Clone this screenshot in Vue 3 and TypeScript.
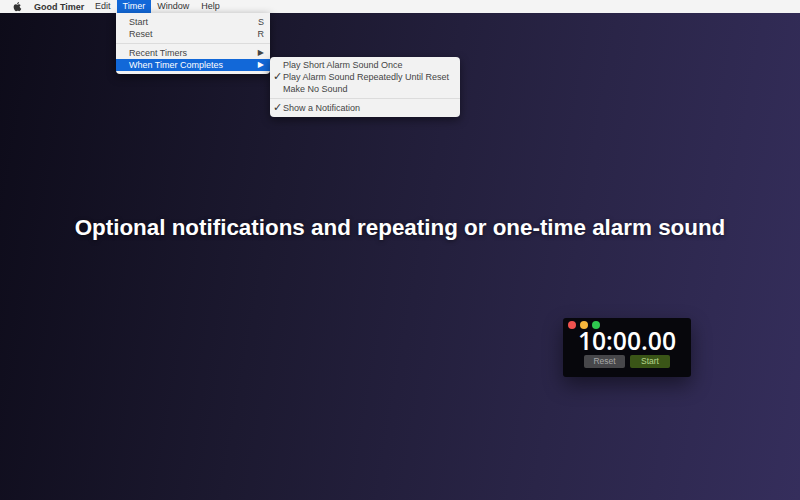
<script setup lang="ts">
const menus = ["Edit", "Timer", "Window", "Help"];
const alarmItems = [
  { label: "Play Short Alarm Sound Once", on: false },
  { label: "Play Alarm Sound Repeatedly Until Reset", on: true },
  { label: "Make No Sound", on: false },
];
</script>

<template>
  <main class="desktop">
    <header class="menubar">
      <svg class="apple" viewBox="0 0 14 16" width="9" height="11">
        <path d="M10.4 8.5c0-1.7 1.4-2.5 1.5-2.6-.8-1.200-2.100-1.300-2.500-1.400-1.100-.1-2.100.6-2.600.6-.6 0-1.400-.6-2.300-.6C3.300 4.500 2.200 5.200 1.600 6.200c-1.300 2.200-.3 5.500.9 7.300.6.900 1.300 1.900 2.300 1.800.9 0 1.300-.6 2.400-.6s1.400.6 2.400.6 1.600-.9 2.200-1.800c.7-1 1-2 1-2.100-.1 0-1.900-.8-2.400-2.900zM8.600 3.200c.5-.6.800-1.500.7-2.300-.7 0-1.600.5-2.100 1.100-.5.500-.9 1.400-.8 2.200.8.100 1.700-.4 2.200-1z" />
      </svg>
      <span class="app-name">Good Timer</span>
      <span
        v-for="m in menus"
        :key="m"
        class="menu-title"
        :class="{ open: m === 'Timer' }"
      >{{ m }}</span>
    </header>

    <div class="menu timer-menu">
      <div class="item"><span>Start</span><span class="key">S</span></div>
      <div class="item"><span>Reset</span><span class="key">R</span></div>
      <div class="sep"></div>
      <div class="item"><span>Recent Timers</span><span class="arrow">▶</span></div>
      <div class="item active"><span>When Timer Completes</span><span class="arrow">▶</span></div>
    </div>

    <div class="menu alarm-menu">
      <div v-for="a in alarmItems" :key="a.label" class="item">
        <span class="check">{{ a.on ? "✓" : "" }}</span>
        <span>{{ a.label }}</span>
      </div>
      <div class="sep"></div>
      <div class="item">
        <span class="check">✓</span>
        <span>Show a Notification</span>
      </div>
    </div>

    <h1 class="headline">Optional notifications and repeating or one-time alarm sound</h1>

    <section class="timer-window">
      <div class="lights">
        <i class="red"></i>
        <i class="yellow"></i>
        <i class="green"></i>
      </div>
      <div class="clock">10:00.00</div>
      <div class="buttons">
        <button class="reset">Reset</button>
        <button class="start">Start</button>
      </div>
    </section>
  </main>
</template>

<style>
body {
  margin: 0;
}
</style>

<style scoped>
.desktop {
  position: relative;
  width: 800px;
  height: 500px;
  overflow: hidden;
  display: flex;
  flex-direction: column;
  background: linear-gradient(100deg, #0d0b19 0%, #1c1930 35%, #2a2548 70%, #352e5c 100%);
  font-family: "Liberation Sans", Arial, sans-serif;
}

.menubar {
  height: 13px;
  flex: none;
  display: flex;
  align-items: center;
  background: #f4f4f4;
  color: #333;
  font-size: 9px;
  white-space: nowrap;
}

.apple {
  margin-left: 13px;
  margin-right: 12px;
  fill: #333;
}

.app-name {
  font-weight: bold;
  margin-right: 6px;
  width: 49px;
}

.menu-title {
  padding: 0 6px;
  line-height: 13px;
}

.menu-title.open {
  background: #1268d8;
  color: #fff;
}

.menu {
  position: absolute;
  background: #f2f2f2;
  color: #444;
  font-size: 9px;
  white-space: nowrap;
  box-shadow: 0 3px 10px rgba(0, 0, 0, 0.45);
}

.timer-menu {
  left: 116px;
  top: 13px;
  width: 154px;
  padding: 3px 0;
  border-radius: 0 0 4px 4px;
}

.alarm-menu {
  left: 270px;
  top: 57px;
  width: 190px;
  padding: 2px 0 3px;
  border-radius: 4px;
}

.item {
  height: 12px;
  display: flex;
  align-items: center;
  line-height: 12px;
}

.timer-menu .item {
  justify-content: space-between;
  padding: 0 6px 0 13px;
}

.item.active {
  background: #1268d8;
  color: #fff;
}

.arrow {
  font-size: 8px;
  font-family: "DejaVu Sans", sans-serif;
}

.check {
  width: 13px;
  flex: none;
  padding-left: 3px;
  box-sizing: border-box;
  font-family: "DejaVu Sans", sans-serif;
  font-size: 11px;
  font-weight: bold;
  color: #333;
}

.sep {
  height: 1px;
  margin: 3px 0;
  background: #dcdcdc;
}

.headline {
  margin: 201px 0 0;
  text-align: center;
  color: #fff;
  font-size: 22.400px;
  line-height: 28px;
  font-weight: bold;
  text-shadow: 0 1px 4px rgba(0, 0, 0, 0.5);
}

.timer-window {
  position: absolute;
  left: 563px;
  top: 318px;
  width: 128px;
  height: 59px;
  border-radius: 3px;
  background: #07070c;
  box-shadow: 0 8px 20px rgba(0, 0, 0, 0.45);
  display: flex;
  flex-direction: column;
  align-items: center;
}

.lights {
  align-self: flex-start;
  display: flex;
  gap: 4px;
  padding: 3px 0 0 5px;
}

.lights i {
  width: 8px;
  height: 8px;
  border-radius: 50%;
}

.red { background: #f0524f; }
.yellow { background: #f6b73c; }
.green { background: #2fc84f; }

.clock {
  color: #fff;
  font-family: "Open Sans", sans-serif;
  font-size: 24.700px;
  font-weight: 600;
  line-height: 24px;
}

.buttons {
  display: flex;
  gap: 5px;
  margin-top: 2px;
}

.buttons button {
  height: 13px;
  padding: 0;
  border: 0;
  border-radius: 2px;
  font-family: inherit;
  font-size: 8.500px;
  line-height: 13px;
}

.buttons .reset {
  width: 41px;
  background: #47474a;
  color: #a8a8a8;
}

.buttons .start {
  width: 40px;
  background: #3a5517;
  color: #b5d58a;
}
</style>
